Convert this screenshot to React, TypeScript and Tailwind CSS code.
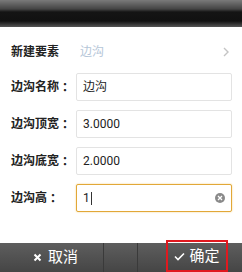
import React from "react";

const font = { fontFamily: '"Roboto", "Noto Sans CJK SC", sans-serif' };

function Field({ label, value, focused }: { label: string; value: string; focused?: boolean }) {
  return (
    <div className="flex items-center h-[28px] pl-[11px]">
      <div className="w-[65px] text-[12px] font-bold text-[#222] leading-none flex items-center">
        <span>{label}</span>
        <span className="font-['Noto_Sans_CJK_TC',sans-serif]">：</span>
      </div>
      <div
        className={
          focused
            ? "relative flex items-center w-[156px] h-[28px] border border-[#e2a838] rounded-[2px] bg-white pl-[6px] shadow-[0_0_2px_#f2d28a]"
            : "relative flex items-center w-[156px] h-[28px] border border-[#e3e3e3] rounded-[2px] bg-white pl-[6px]"
        }
      >
        <span className="text-[12px] text-[#222] leading-none">{value}</span>
        {focused && <span className="w-[1px] h-[13px] bg-[#333] ml-[1px]"></span>}
        {focused && (
          <span className="absolute right-[6px] top-[8px] w-[10px] h-[10px] rounded-full bg-[#8a8a8a] flex items-center justify-center">
            <svg width="6" height="6" viewBox="0 0 6 6">
              <path d="M1 1L5 5M5 1L1 5" stroke="#fff" strokeWidth="1.3" />
            </svg>
          </span>
        )}
      </div>
    </div>
  );
}

export default function App() {
  return (
    <div className="w-[242px] h-[272px] bg-white flex flex-col overflow-hidden" style={font}>
      <div className="h-[27px] bg-[linear-gradient(to_bottom,#7a7a7a_0px,#444_9px,#141414_12px,#111_21px,#555_27px)]"></div>
      <div className="h-[40px] flex items-center pl-[11px] pt-[10px]">
        <div className="w-[69px] text-[12px] font-bold text-[#222] leading-none">新建要素</div>
        <div className="flex-1 text-[12px] text-[#b5c6d8] leading-none">边沟</div>
        <svg width="8" height="12" viewBox="0 0 8 12" className="mr-[12px]">
          <path d="M2 2L6 6L2 10" fill="none" stroke="#c4c4c4" strokeWidth="1.4" />
        </svg>
      </div>
      <div className="flex flex-col gap-[9px] mt-[6px]">
        <Field label="边沟名称" value="边沟" />
        <Field label="边沟顶宽" value="3.0000" />
        <Field label="边沟底宽" value="2.0000" />
        <Field label="边沟高" value="1" focused />
      </div>
      <div className="flex-1"></div>
      <div className="relative h-[29px] flex bg-[linear-gradient(to_bottom,#5e5e5e,#454545)] text-white">
        <div className="w-[104px] flex items-center justify-center gap-[6px] border-r border-[#3a3a3a] pl-[8px]">
          <svg width="9" height="9" viewBox="0 0 9 9">
            <path d="M1.5 1.5L7.5 7.5M7.5 1.5L1.5 7.5" stroke="#fff" strokeWidth="2" />
          </svg>
          <span className="text-[15px] leading-none">取消</span>
        </div>
        <div className="w-[34px] border-r border-[#3a3a3a]"></div>
        <div className="flex-1 flex items-start pl-[28px]">
          <div className="mt-[-3px] h-[32px] w-[62px] border-2 border-[#e0191f] flex items-center justify-center gap-[4px]">
            <svg width="11" height="9" viewBox="0 0 11 9">
              <path d="M1 4.5L4 7.5L10 1.5" fill="none" stroke="#fff" strokeWidth="1.6" />
            </svg>
            <span className="text-[15px] leading-none">确定</span>
          </div>
        </div>
      </div>
    </div>
  );
}
